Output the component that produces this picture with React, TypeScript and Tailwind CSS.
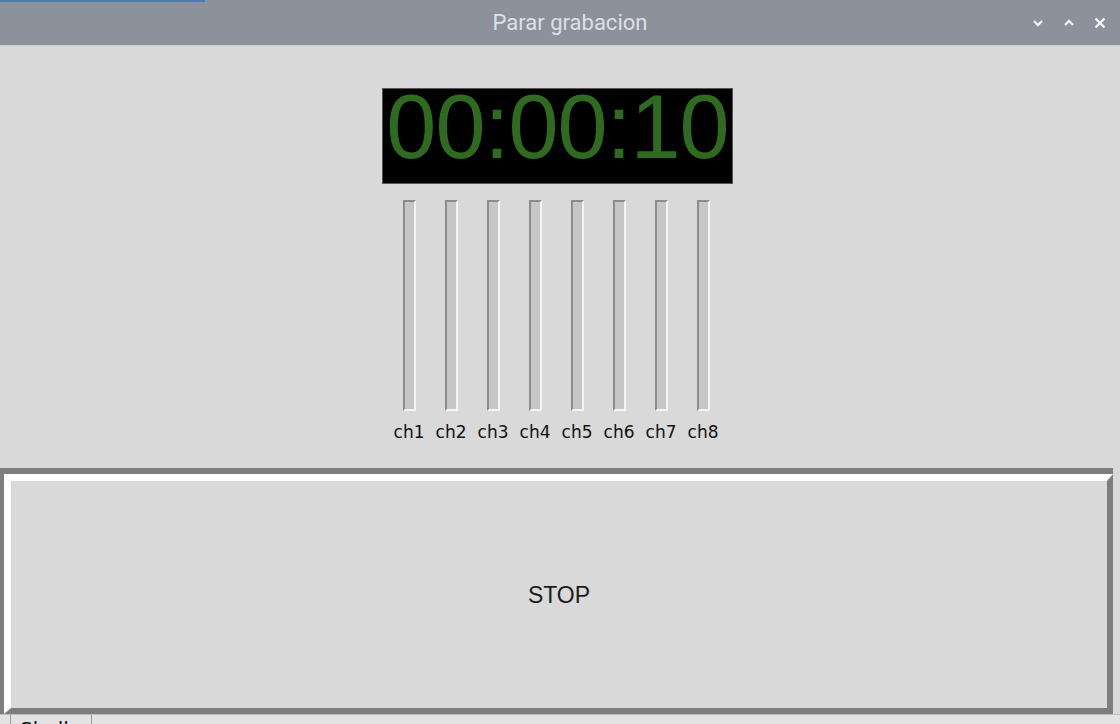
import { Fragment } from "react";

const channels = ["ch1", "ch2", "ch3", "ch4", "ch5", "ch6", "ch7", "ch8"];

function TitleButtons() {
  return (
    <div className="absolute right-[14px] top-0 flex h-[45px] items-center gap-[19px]">
      <svg width="12" height="12" viewBox="0 0 12 12">
        <path d="M2 4 L6 8 L10 4" stroke="#f2f2f2" strokeWidth="2.4" fill="none" />
      </svg>
      <svg width="12" height="12" viewBox="0 0 12 12">
        <path d="M2 8 L6 4 L10 8" stroke="#f2f2f2" strokeWidth="2.4" fill="none" />
      </svg>
      <svg width="12" height="12" viewBox="0 0 12 12">
        <path d="M1.5 1.5 L10.5 10.5 M10.5 1.5 L1.5 10.5" stroke="#f2f2f2" strokeWidth="2.4" fill="none" />
      </svg>
    </div>
  );
}

export default function App() {
  return (
    <div className="flex h-[724px] w-[1120px] flex-col overflow-hidden bg-[#d9d9d9]">
      {/* title bar */}
      <div className="relative h-[45px] shrink-0 bg-[#8b929b]">
        <div className="absolute left-0 top-0 h-[2px] w-[205px] bg-[#4b79b6]" />
        <div className="flex h-full items-center justify-center pl-[20px]">
          <span className="font-['Roboto',sans-serif] text-[22px] text-[#dde0e4]">
            Parar grabacion
          </span>
        </div>
        <TitleButtons />
      </div>
      <div className="h-px shrink-0 bg-[#c9cbce]" />

      {/* meter area */}
      <div className="flex h-[422px] shrink-0 flex-col items-center pr-[5px] pt-[42px]">
        <div className="h-[96px] w-[351px] border border-[#555] bg-black">
          <div className="text-center font-['Liberation_Sans',Arial,sans-serif] text-[90px] leading-[76px] tracking-[-1px] text-[#2f6b1f]">
            00:00:10
          </div>
        </div>

        <div className="mt-[16px] flex pr-[3px]">
          {channels.map((ch) => (
            <div key={ch} className="flex w-[42px] flex-col items-center">
              <div className="h-[211px] w-[13px] border-2 border-b-[#f4f4f4] border-l-[#8c8c8c] border-r-[#f4f4f4] border-t-[#8c8c8c] bg-[#c6c6c6]" />
              <span className="mt-[11px] font-['DejaVu_Sans',sans-serif] text-[17px] leading-[20px] text-[#111]">
                {ch}
              </span>
            </div>
          ))}
        </div>
      </div>

      {/* stop button */}
      <div className="flex h-[246px] shrink-0">
        <div className="flex flex-1 bg-[#7e7e7e] pl-[4px] pt-[6px]">
          <div className="flex flex-1 border-b-[6px] border-l-[7px] border-r-[6px] border-t-[7px] border-b-[#7e7e7e] border-l-white border-r-[#7e7e7e] border-t-white bg-[#d9d9d9]">
            <button className="flex flex-1 items-center justify-center pt-[2px] font-['Liberation_Sans',Arial,sans-serif] text-[23px] text-[#1c1c1c]">
              STOP
            </button>
          </div>
        </div>
        <div className="w-[7px] bg-[#d9d9d9]" />
      </div>

      {/* window behind */}
      <Fragment>
        <div className="relative h-[10px] shrink-0 overflow-hidden border-t border-[#bdbdbd] bg-[#e3e3e3]">
          <div className="absolute left-[10px] top-0 h-full w-px bg-[#9a9a9a]" />
          <div className="absolute left-[91px] top-0 h-full w-px bg-[#9a9a9a]" />
          <span className="absolute left-[20px] top-[4px] font-['DejaVu_Sans',sans-serif] text-[20px] leading-none text-[#111]">
            Shell
          </span>
        </div>
      </Fragment>
    </div>
  );
}
